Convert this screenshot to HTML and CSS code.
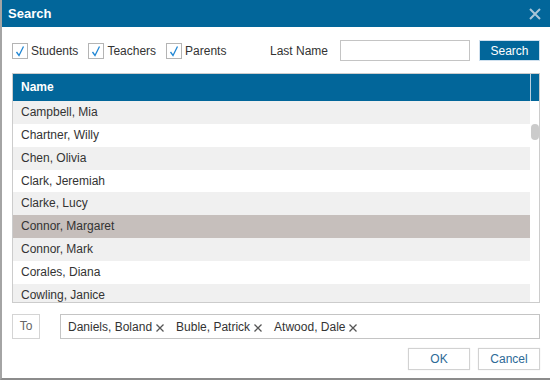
FILE: index.html
```html
<!DOCTYPE html>
<html lang="en">
<head>
    <meta charset="UTF-8">
    <title>Search</title>
    <link rel="stylesheet" href="styles.css">
</head>
<body>
    <div class="dialog">
        <!-- Title bar -->
        <div class="titlebar">
            <span class="title">Search</span>
            <svg class="close" width="12" height="12" viewBox="0 0 12 12">
                <path d="M1 1 L11 11 M11 1 L1 11" stroke="#a9c5d8" stroke-width="2" fill="none"/>
            </svg>
        </div>

        <div class="content">
            <!-- Filters -->
            <div class="toolbar">
                <label class="check">
                    <span class="box"><svg width="14" height="14" viewBox="0 0 14 14"><path d="M3.5 8 L6 11.5 L10.5 2.5" stroke="#1f86d4" stroke-width="1.3" fill="none"/></svg></span>
                    Students
                </label>
                <label class="check">
                    <span class="box"><svg width="14" height="14" viewBox="0 0 14 14"><path d="M3.5 8 L6 11.5 L10.5 2.5" stroke="#1f86d4" stroke-width="1.3" fill="none"/></svg></span>
                    Teachers
                </label>
                <label class="check">
                    <span class="box"><svg width="14" height="14" viewBox="0 0 14 14"><path d="M3.5 8 L6 11.5 L10.5 2.5" stroke="#1f86d4" stroke-width="1.3" fill="none"/></svg></span>
                    Parents
                </label>
                <div class="search-group">
                    <span class="field-label">Last Name</span>
                    <input type="text" class="text-input">
                    <button class="btn-primary">Search</button>
                </div>
            </div>

            <!-- Results -->
            <div class="list">
                <div class="list-head">
                    <div class="head-cell">Name</div>
                    <div class="head-scroll"></div>
                </div>
                <div class="list-body">
                    <div class="rows">
                        <div class="row">Campbell, Mia</div>
                        <div class="row">Chartner, Willy</div>
                        <div class="row">Chen, Olivia</div>
                        <div class="row">Clark, Jeremiah</div>
                        <div class="row">Clarke, Lucy</div>
                        <div class="row selected">Connor, Margaret</div>
                        <div class="row">Connor, Mark</div>
                        <div class="row">Corales, Diana</div>
                        <div class="row">Cowling, Janice</div>
                    </div>
                    <div class="scroll-track"><div class="thumb"></div></div>
                </div>
            </div>

            <!-- Recipients -->
            <div class="to-row">
                <div class="to-label">To</div>
                <div class="recipients">
                    <span class="tag">Daniels, Boland <svg width="8" height="8" viewBox="0 0 8 8"><path d="M0.5 0.5 L7.5 7.5 M7.5 0.5 L0.5 7.5" stroke="#555" stroke-width="1.3"/></svg></span>
                    <span class="tag">Buble, Patrick <svg width="8" height="8" viewBox="0 0 8 8"><path d="M0.5 0.5 L7.5 7.5 M7.5 0.5 L0.5 7.5" stroke="#555" stroke-width="1.3"/></svg></span>
                    <span class="tag">Atwood, Dale <svg width="8" height="8" viewBox="0 0 8 8"><path d="M0.5 0.5 L7.5 7.5 M7.5 0.5 L0.5 7.5" stroke="#555" stroke-width="1.3"/></svg></span>
                </div>
            </div>

            <div class="footer">
                <button class="btn">OK</button>
                <button class="btn">Cancel</button>
            </div>
        </div>
    </div>
</body>
</html>
```

FILE: styles.css
```css
body {
    margin: 0;
    font-family: "Liberation Sans", Arial, sans-serif;
    font-size: 12px;
    color: #333;
    background: white;
}
.dialog {
    width: 550px;
    height: 380px;
    box-sizing: border-box;
    border-left: 2px solid #a4a4a4;
    border-bottom: 2px solid #8c8c8c;
    overflow: hidden;
}
.titlebar {
    height: 27px;
    background: #02669a;
    display: flex;
    align-items: center;
    justify-content: space-between;
    padding: 0 9px 0 6px;
}
.title {
    color: white;
    font-size: 13px;
    font-weight: bold;
    line-height: 27px;
}
.close { display: block; }
.content {
    padding: 13px 10px 0 10px;
}
.toolbar {
    display: flex;
    align-items: center;
    height: 21px;
}
.check {
    display: inline-flex;
    align-items: center;
    gap: 3px;
    margin-right: 10px;
}
.box {
    width: 14px;
    height: 14px;
    border: 1px solid #b4b4b4;
    display: inline-block;
}
.box svg { display: block; }
.search-group {
    margin-left: auto;
    display: flex;
    align-items: center;
}
.field-label { margin-right: 12px; }
.text-input {
    width: 130px;
    height: 21px;
    box-sizing: border-box;
    border: 1px solid #c4c4c4;
    margin: 0 9px 0 0;
    padding: 0 4px;
}
.btn-primary {
    width: 61px;
    height: 21px;
    box-sizing: border-box;
    background: #02669a;
    color: white;
    border: 1px solid #cfe0ee;
    font-family: inherit;
    font-size: 12px;
    padding: 0;
}
.list {
    margin-top: 12px;
    width: 528px;
    height: 230px;
    box-sizing: border-box;
    border: 1px solid #cccccc;
    display: flex;
    flex-direction: column;
}
.list-head {
    display: flex;
    height: 27px;
    background: #02669a;
    color: white;
    flex-shrink: 0;
}
.head-cell {
    flex: 1;
    font-weight: bold;
    line-height: 27px;
    padding-left: 8px;
}
.head-scroll {
    width: 8px;
    border-left: 1px solid #b8cfdf;
}
.list-body {
    flex: 1;
    display: flex;
    overflow: hidden;
}
.rows { flex: 1; }
.row {
    height: 22.85px;
    line-height: 22px;
    padding-left: 8px;
    background: white;
}
.row:nth-child(odd) { background: #f0f0f0; }
.row.selected { background: #c6bfbc; }
.scroll-track {
    width: 9px;
    background: white;
}
.thumb {
    margin: 23px 0 0 1px;
    width: 8px;
    height: 16px;
    border-radius: 4px;
    background: #cbcbcb;
}
.to-row {
    margin-top: 11px;
    display: flex;
    gap: 20px;
    height: 25px;
}
.to-label {
    width: 28px;
    box-sizing: border-box;
    border: 1px solid #d4d4d4;
    color: #666;
    text-align: center;
    line-height: 23px;
}
.recipients {
    flex: 1;
    box-sizing: border-box;
    border: 1px solid #c4c4c4;
    display: flex;
    align-items: center;
    gap: 12px;
    padding-left: 7px;
}
.tag {
    display: inline-flex;
    align-items: center;
    gap: 4px;
}
.tag svg { margin-top: 2px; }
.footer {
    margin-top: 9px;
    display: flex;
    justify-content: flex-end;
    gap: 8px;
}
.btn {
    width: 62px;
    height: 22px;
    box-sizing: border-box;
    background: white;
    border: 1px solid #d2d2d2;
    box-shadow: 0 0 1px #e0e0e0;
    color: #2d6a97;
    font-family: inherit;
    font-size: 12px;
    padding: 0;
}
```
